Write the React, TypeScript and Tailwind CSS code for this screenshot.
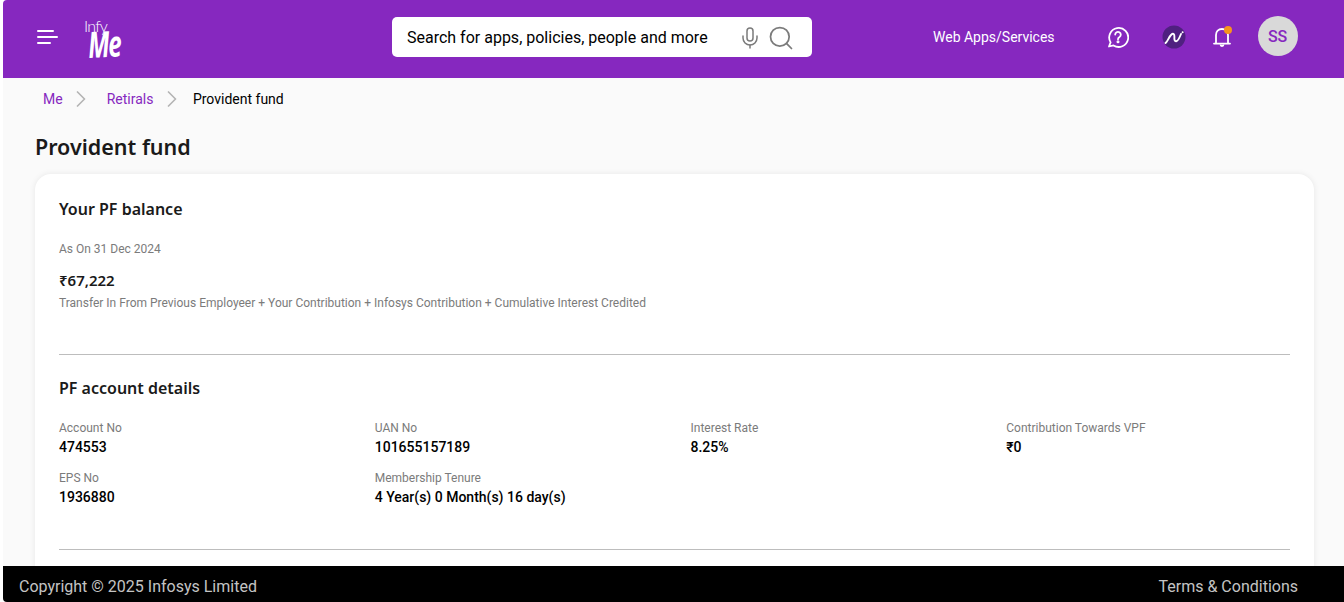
import { ChevronRight, Mic, Search } from "lucide-react";

const details = [
  { label: "Account No", value: "474553" },
  { label: "UAN No", value: "101655157189" },
  { label: "Interest Rate", value: "8.25%" },
  { label: "Contribution Towards VPF", value: "₹0" },
  { label: "EPS No", value: "1936880" },
  { label: "Membership Tenure", value: "4 Year(s) 0 Month(s) 16 day(s)" },
];

const headingFont = "font-['Noto_Sans',sans-serif]";

function Header() {
  return (
    <header className="flex h-[78px] shrink-0 items-center rounded-tl-[4px] bg-[#8628bf] pb-1 text-white">
      {/* hamburger */}
      <svg width="22" height="16" viewBox="0 0 22 16" className="ml-[33px]" fill="none" stroke="white" strokeWidth="2" strokeLinecap="round">
        <path d="M2 2h15M2 8h19M2 14h12" />
      </svg>

      {/* logo */}
      <div className="relative ml-[26px] h-[42px] w-[40px] shrink-0">
        <span className="absolute left-0 top-[1px] text-[16px] font-light leading-[18px] tracking-[-0.8px] font-['Lato',sans-serif]">
          Infy
        </span>
        <span className="absolute left-[4px] top-[10px] origin-left -rotate-3 scale-x-[.68] text-[36px] font-bold italic leading-[38px] tracking-[-2px] font-['Open_Sans',sans-serif]">
          Me
        </span>
      </div>

      {/* search */}
      <div className="ml-[268px] flex h-10 w-[420px] shrink-0 items-center rounded-[5px] bg-white pl-[15px] pt-[2px] text-black">
        <span className="flex-1 text-base">Search for apps, policies, people and more</span>
        <Mic size={24} strokeWidth={1.5} className="text-[#7b7b7b]" />
        <Search size={28} strokeWidth={1.5} className="ml-[5px] mr-[17px] text-[#7b7b7b]" />
      </div>

      <span className="ml-[121px] text-sm">Web Apps/Services</span>

      {/* help */}
      <svg width="22" height="22" viewBox="0 0 22 22" className="ml-[52px]" fill="none" stroke="white" strokeWidth="1.8">
        <path d="M2 20.5 L3.6 16.4 A9.5 9.5 0 1 1 6.5 19.4 L2 20.5 Z" strokeLinejoin="round" />
        <path d="M8.2 8.6a2.8 2.8 0 1 1 4.3 2.4c-1 .6-1.5 1.2-1.5 2.2" strokeLinecap="round" />
        <circle cx="11" cy="15.8" r="0.6" fill="white" />
      </svg>

      {/* assistant badge */}
      <svg width="24" height="24" viewBox="0 0 24 24" className="ml-[33px]" fill="none">
        <circle cx="12" cy="12" r="11.5" fill="#4f2080" />
        <path d="M3.5 18c1.6-.5 3-5.5 5.5-8 2.4-2.4 3.6-.8 3.4 2-.2 2.6.2 4.5 1.8 4.3 2-.3 3.6-4.3 4.8-7.3" stroke="white" strokeWidth="1.9" strokeLinecap="round" />
        <circle cx="20.6" cy="7.2" r="1" fill="white" />
      </svg>

      {/* notifications */}
      <div className="relative ml-[27px] h-[22px] w-[18px]">
        <svg width="18" height="22" viewBox="0 0 18 22" fill="none" stroke="white" strokeWidth="1.8" className="absolute left-0 top-0">
          <path d="M3 17.5V9c0-3.6 2.400-6 6-6s6 2.400 6 6v8.500" />
          <path d="M1 17.6h16" strokeLinecap="round" />
          <path d="M7.500 18.500a1.500 1.500 0 0 0 3 0" />
        </svg>
        <span className="absolute right-[-1px] top-0 h-2 w-2 rounded-full bg-[#f7941d]" />
      </div>

      {/* avatar */}
      <div className="mb-[2px] ml-[27px] flex h-10 w-10 items-center justify-center rounded-full bg-[#d9d9d9] pt-[2px] text-base font-medium text-[#8628bf]">
        SS
      </div>
    </header>
  );
}

function App() {
  return (
    <div className="flex h-screen flex-col overflow-hidden bg-white pl-[3px] font-['Roboto',sans-serif]">
      <Header />

      <main className="min-h-0 flex-1 overflow-hidden bg-[#fafafa] pl-[32px] pr-[30px]">
        {/* breadcrumb */}
        <nav className="flex h-[42px] items-center pl-2 text-sm">
          <span className="text-[#8628bf]">Me</span>
          <ChevronRight size={28} strokeWidth={1.5} className="ml-[4px] text-[#b5b5b5]" />
          <span className="ml-[12px] text-[#8628bf]">Retirals</span>
          <ChevronRight size={28} strokeWidth={1.5} className="ml-[5px] text-[#b5b5b5]" />
          <span className="ml-[6.500px] text-black">Provident fund</span>
        </nav>

        <h1 className={`mt-[10px] text-[21.5px] font-semibold leading-[34px] text-[#1a1a1a] ${headingFont}`}>
          Provident fund
        </h1>

        <section className="mt-[10px] rounded-[16px] bg-white px-6 pt-[24px] pb-10 shadow-[0_0_6px_rgba(0,0,0,0.08)]">
          <h2 className={`text-base font-semibold leading-[22px] text-[#1a1a1a] ${headingFont}`}>Your PF balance</h2>
          <p className="mt-[21px] text-xs leading-4 text-[#7b7b7b]">As On 31 Dec 2024</p>
          <p className={`mt-[13px] text-[15px] font-semibold leading-[20px] text-[#1a1a1a] ${headingFont}`}>₹67,222</p>
          <p className="mt-[5px] text-xs leading-4 text-[#7b7b7b]">
            Transfer In From Previous Employeer + Your Contribution + Infosys Contribution + Cumulative Interest Credited
          </p>

          <hr className="mt-[43px] border-[#bdbdbd]" />

          <h2 className={`mt-[22px] text-base font-semibold leading-[22px] text-[#1a1a1a] ${headingFont}`}>PF account details</h2>

          <div className="mt-[21px] grid grid-cols-4 gap-x-8 gap-y-[12px]">
            {details.map((item) => (
              <div key={item.label}>
                <p className="text-xs leading-4 text-[#7b7b7b]">{item.label}</p>
                <p className="text-sm font-medium leading-[22px] text-black">{item.value}</p>
              </div>
            ))}
          </div>

          <hr className="mt-[41px] border-[#bdbdbd]" />
        </section>
      </main>

      <footer className="flex h-9 shrink-0 items-center justify-between rounded-bl-[4px] bg-black pl-4 pr-[46px] pt-[6px] text-base text-[#c4c4c4]">
        <span>Copyright © 2025 Infosys Limited</span>
        <span>Terms &amp; Conditions</span>
      </footer>
    </div>
  );
}

export default App;
